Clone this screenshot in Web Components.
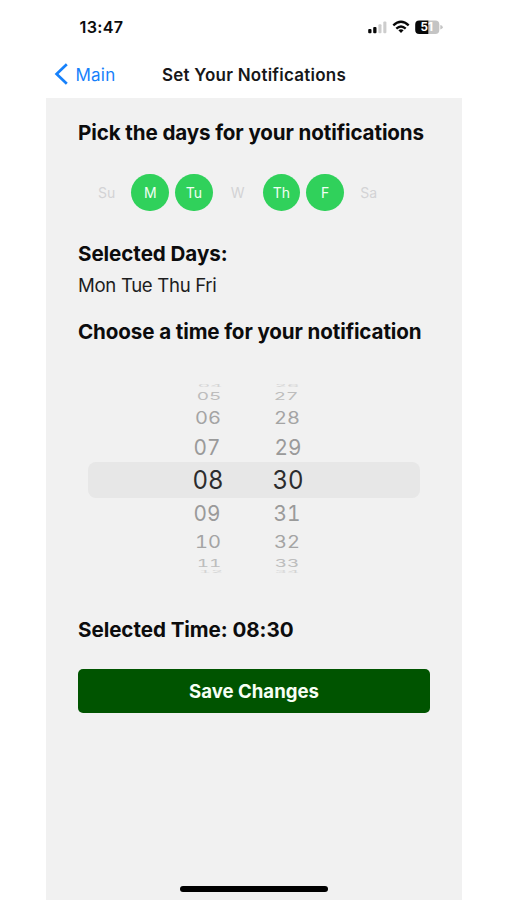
<!DOCTYPE html>
<html lang="en">
<head>
<meta charset="utf-8">
<title>Set Your Notifications</title>
<style>
html,body{margin:0;background:#fff}
body{font-family:Inter,"Liberation Sans",sans-serif;height:900px;overflow:hidden;color:#0c0c0d}
</style>
</head>
<body>
<notification-screen></notification-screen>
<script>
// A single line of text whose tracking is adjusted to fill the given width.
class TextLine extends HTMLElement {
  connectedCallback() {
    const g = n => this.getAttribute(n);
    this.attachShadow({mode: 'open'}).innerHTML = `<style>
      :host{display:block;height:${g('line') || 24}px;line-height:${g('line') || 24}px;font-size:${g('size')}px;font-weight:${g('weight') || 400};white-space:nowrap}
      span{display:inline-block}</style><span><slot></slot></span>`;
    const target = parseFloat(g('fit'));
    if (target) {
      const s = this.shadowRoot.querySelector('span');
      const n = this.textContent.length;
      const ls = (target - s.getBoundingClientRect().width) / n;
      s.style.letterSpacing = ls + 'px';
    }
  }
}

class StatusBar extends HTMLElement {
  connectedCallback() {
    this.attachShadow({mode: 'open'}).innerHTML = `<style>
      :host{display:flex;align-items:center;justify-content:space-between;height:54px;padding:0 19px 0 33.5px;box-sizing:border-box}
      svg{display:block}</style>
      <text-line size="16.2" weight="600" fit="44">13:47</text-line>
      <svg width="76" height="20" viewBox="0 0 76 20">
        <g fill="#080808"><rect x="1.2" y="12" width="3.3" height="4.2" rx="1"/><rect x="6.2" y="10" width="3.3" height="6.2" rx="1"/></g>
        <g fill="#cdcdcd"><rect x="11.4" y="7.2" width="3.1" height="9" rx="1"/><rect x="16.3" y="4.6" width="3.1" height="11.6" rx="1"/></g>
        <g fill="none" stroke="#080808" stroke-width="2.3"><path d="M26.3 8.4Q34 1.2 41.7 8.4"/><path d="M29.3 11.6Q34 7.3 38.7 11.6"/></g>
        <path fill="#080808" d="M31.4 13.3Q34 11.2 36.6 13.3L34 16.1Z"/>
        <path fill="#c4c4c4" d="M61 3.4H68.3a4 4 0 0 1 4 4v5.6a4 4 0 0 1-4 4H61Z"/>
        <path fill="#c4c4c4" d="M73.3 8Q75.8 8.6 75.8 10.2T73.3 12.4Z"/>
        <path fill="#080808" d="M61.3 3.4H52.2a4 4 0 0 0-4 4v5.6a4 4 0 0 0 4 4h9.1Z"/>
        <text x="59.8" y="14.3" fill="#fff" font-family="Inter,sans-serif" font-size="11.6" font-weight="700" text-anchor="middle">51</text>
      </svg>`;
  }
}

class NavBar extends HTMLElement {
  connectedCallback() {
    this.attachShadow({mode: 'open'}).innerHTML = `<style>
      :host{display:flex;align-items:flex-start;height:43.5px;padding:9px 0 0 8px;box-sizing:border-box}
      svg{display:block;margin:-.7px 6.5px 0 0}
      .back{display:flex;color:#1681fb;width:108px}
      .title{color:#171719}</style>
      <div class="back"><svg width="15" height="24" viewBox="0 0 15 24"><path d="M12.8 2.2L2.6 12L12.8 21.8" fill="none" stroke="currentColor" stroke-width="2.7"/></svg>
      <text-line size="17" fit="40">Main</text-line></div>
      <text-line class="title" size="17" weight="600" fit="184">Set Your Notifications</text-line>`;
  }
}

class DayToggle extends HTMLElement {
  connectedCallback() {
    this.attachShadow({mode: 'open'}).innerHTML = `<style>
      :host{display:flex;align-items:center;justify-content:center;width:37.6px;height:37.6px;border-radius:50%;font-size:14px;color:#d3d3d5}
      :host([on]){background:#30d15b;color:#f1fff4}</style><slot></slot>`;
  }
}

class TimePicker extends HTMLElement {
  connectedCallback() {
    // hour, minute, row height, x scale, y scale, hour centre, minute centre, colour
    const rows = [
      ['04','26',5,.76,.14,164,240.5,'#d4d4d4'],
      ['05','27',15,.76,.43,162.8,240.5,'#bdbdbd'],
      ['06','28',28,.80,.67,161.7,241.5,'#a4a4a4'],
      ['07','29',30,.83,.85,161,241.8,'#9a9a9a'],
      ['08','30',36,.96,1,162.4,242.4,'#2c2c2d'],
      ['09','31',30,.83,.85,161,241,'#9a9a9a'],
      ['10','32',28,.80,.67,162.4,240.8,'#a4a4a4'],
      ['11','33',13.5,.76,.43,163,240.6,'#bdbdbd'],
      ['12','34',4.5,.76,.14,165,241,'#d4d4d4']
    ];
    this.attachShadow({mode: 'open'}).innerHTML = `<style>
      :host{display:flex;flex-direction:column;height:190px;font-variant-numeric:tabular-nums}
      .row{display:flex;flex:none;align-items:center;box-sizing:border-box;font-size:25px;line-height:30px}
      .row.on{margin:0 41.5px;border-radius:8px;background:#e7e7e7}
      .row.on .first{margin-left:-41.5px}
      .row span{flex:none;text-align:center;white-space:nowrap}
      </style>` + rows.map(([h, m, ht, sx, sy, hx, mx, c]) => {
        const gap = mx - hx - 60;
        const t = `display:block;transform:scale(${sx},${sy})`;
        return `<div class="row${ht === 36 ? ' on' : ''}" style="height:${ht}px;color:${c}">
        <span class="first" style="padding-left:${hx - 30}px;width:60px"><span style="${t}">${h}</span></span>
        <span style="width:60px;margin-left:${gap}px"><span style="${t}">${m}</span></span></div>`;
      }).join('');
  }
}

class SaveButton extends HTMLElement {
  connectedCallback() {
    this.attachShadow({mode: 'open'}).innerHTML = `<style>
      :host{display:flex;align-items:center;justify-content:center;width:352px;height:44.5px;border-radius:5px;background:#005400;color:#f7fff5}
      </style><text-line size="18.6" weight="650" fit="130">Save Changes</text-line>`;
  }
}

class NotificationScreen extends HTMLElement {
  connectedCallback() {
    this.attachShadow({mode: 'open'}).innerHTML = `<style>
      :host{display:flex;flex-direction:column;width:415.5px;height:900px;margin-left:46px}
      main{flex:1;display:flex;flex-direction:column;background:#f1f1f1}
      text-line,save-button{margin-left:32px}
      .days{display:flex;gap:6.1px;margin:28.8px 0 0 41.8px}
      .home{width:148px;height:5.5px;border-radius:3px;background:#000;margin:auto 0 8.5px 134px}
      </style>
      <status-bar></status-bar><nav-bar></nav-bar>
      <main>
        <text-line style="margin-top:23.6px" size="20.6" weight="680" fit="346">Pick the days for your notifications</text-line>
        <div class="days"><day-toggle>Su</day-toggle><day-toggle on>M</day-toggle><day-toggle on>Tu</day-toggle><day-toggle>W</day-toggle><day-toggle on>Th</day-toggle><day-toggle on>F</day-toggle><day-toggle>Sa</day-toggle></div>
        <text-line style="margin-top:31px" size="20.6" weight="680" fit="149.5">Selected Days:</text-line>
        <text-line style="margin-top:6.8px;color:#1d1d1e" size="18.6" fit="138.5">Mon Tue Thu Fri</text-line>
        <text-line style="margin-top:22.6px" size="20.6" weight="680" fit="343.5">Choose a time for your notification</text-line>
        <time-picker style="margin-top:39.9px"></time-picker>
        <text-line style="margin-top:43.8px" size="20.6" weight="650" fit="215.5">Selected Time: 08:30</text-line>
        <save-button style="margin-top:27px"></save-button>
        <div class="home"></div>
      </main>`;
  }
}

customElements.define('text-line', TextLine);
customElements.define('status-bar', StatusBar);
customElements.define('nav-bar', NavBar);
customElements.define('day-toggle', DayToggle);
customElements.define('time-picker', TimePicker);
customElements.define('save-button', SaveButton);
customElements.define('notification-screen', NotificationScreen);
</script>
</body>
</html>
